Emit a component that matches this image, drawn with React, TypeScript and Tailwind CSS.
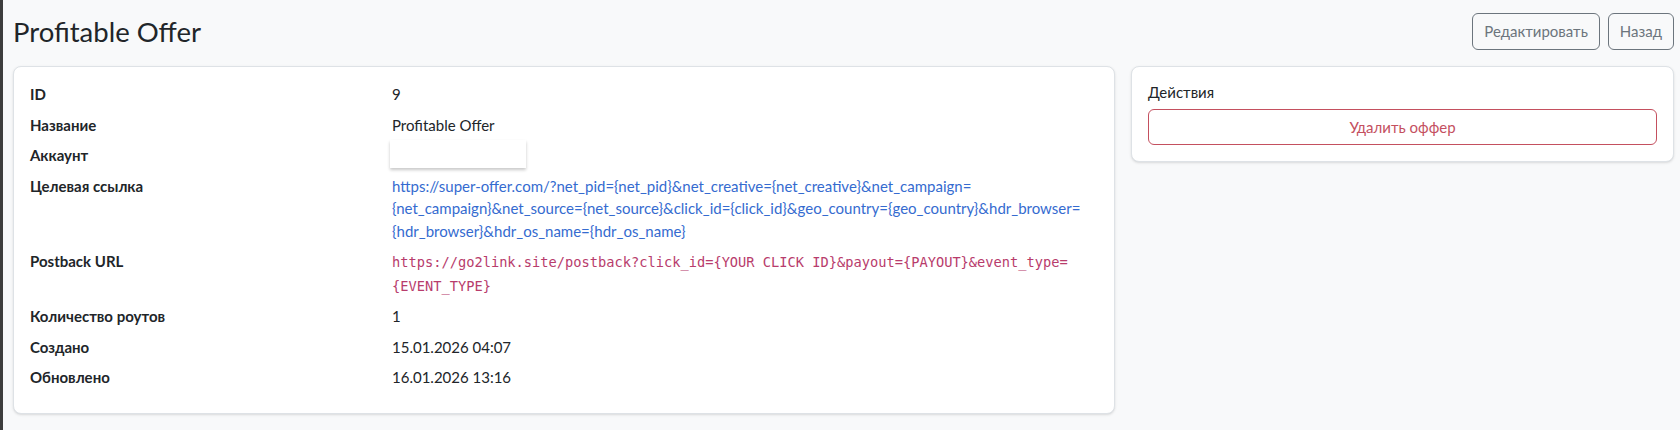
import React from "react";

const link =
  "https://super-offer.com/?net_pid={net_pid}&net_creative={net_creative}&net_campaign={net_campaign}&net_source={net_source}&click_id={click_id}&geo_country={geo_country}&hdr_browser={hdr_browser}&hdr_os_name={hdr_os_name}";

const postback =
  "https://go2link.site/postback?click_id={YOUR CLICK ID}&payout={PAYOUT}&event_type={EVENT_TYPE}";

// allow wrapping right before each "{" like the original page does
const withBreaks = (s: string) =>
  s.split("{").map((part, i) => (
    <React.Fragment key={i}>
      {i > 0 && <wbr />}
      {i > 0 ? "{" + part : part}
    </React.Fragment>
  ));

const Row = ({ label, children }: { label: string; children: React.ReactNode }) => (
  <div className="flex py-1 leading-[22.5px]">
    <div className="w-[362px] shrink-0 font-bold">{label}</div>
    <div className="flex-1 min-w-0">{children}</div>
  </div>
);

export default function App() {
  return (
    <div
      className="flex min-h-[430px] bg-[#f8f9fa] text-[15px] text-[#212529]"
      style={{ fontFamily: "Lato, 'Noto Sans', sans-serif" }}
    >
      <div className="w-[3px] shrink-0 bg-[#3d3d3d]" />
      <div className="flex-1 pl-[10px] pr-[6px]">
        {/* Header */}
        <div className="flex items-center justify-between pt-[13px] pb-[16px]">
          <h1 className="text-[27.5px] leading-[37px]">Profitable Offer</h1>
          <div className="flex gap-2">
            <button className="h-[37px] px-[11px] rounded-md border border-[#6c757d] text-[#6c757d]">
              Редактировать
            </button>
            <button className="h-[37px] px-[11px] rounded-md border border-[#6c757d] text-[#6c757d]">
              Назад
            </button>
          </div>
        </div>

        <div className="flex items-start gap-4">
          {/* Details */}
          <div className="w-[1102px] shrink-0 rounded-lg border border-[#dee2e6] bg-white px-4 pt-3 pb-5 shadow-sm">
            <Row label="ID">9</Row>
            <Row label="Название">Profitable Offer</Row>
            <Row label="Аккаунт">
              <div className="relative h-[22.5px]">
                <div className="absolute left-[-2px] top-[-4px] h-[28px] w-[136px] bg-white shadow-[0_2px_3px_rgba(0,0,0,0.22)]" />
              </div>
            </Row>
            <Row label="Целевая ссылка">
              <a className="text-[#356bd0]">{withBreaks(link)}</a>
            </Row>
            <Row label="Postback URL">
              <code
                className="text-[13.7px] text-[#b83c6c]"
                style={{ fontFamily: "'DejaVu Sans Mono', monospace" }}
              >
                {withBreaks(postback)}
              </code>
            </Row>
            <Row label="Количество роутов">1</Row>
            <Row label="Создано">15.01.2026 04:07</Row>
            <Row label="Обновлено">16.01.2026 13:16</Row>
          </div>

          {/* Actions */}
          <div className="flex-1 rounded-lg border border-[#dee2e6] bg-white p-4 shadow-sm">
            <div className="mb-2 leading-[18px]">Действия</div>
            <button className="h-[36px] w-full rounded-md border border-[#c4505f] text-[#c4505f]">
              Удалить оффер
            </button>
          </div>
        </div>
      </div>
    </div>
  );
}
